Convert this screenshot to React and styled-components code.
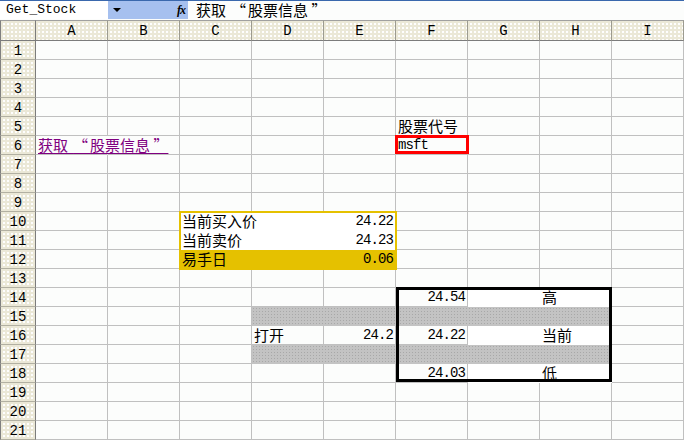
import React from 'react';
import styled, { createGlobalStyle, css } from 'styled-components';

const Global = createGlobalStyle`
  html, body { margin: 0; padding: 0; background: #fcfdfc; }
  body { width: 684px; height: 440px; overflow: hidden; }
`;

const COLS = ['A', 'B', 'C', 'D', 'E', 'F', 'G', 'H', 'I'];
const ROWS = Array.from({ length: 21 }, (_, i) => i + 1);

const Spaced = styled.span`
  letter-spacing: ${(p) => p.$gap}px;
`;

const Title = () => (
  <>
    获<Spaced $gap={5}>取</Spaced>
    <Spaced $gap={2}>“</Spaced>股票信息 ”
  </>
);

const DATA = {
  A6: { t: <Title />, link: true, over: true },
  F5: { t: '股票代号' },
  F6: { t: 'msft', num: true },
  C10: { t: '当前买入价', over: true },
  E10: { t: '24.22', num: true, right: true },
  C11: { t: '当前卖价' },
  E11: { t: '24.23', num: true, right: true },
  C12: { t: '易手日' },
  E12: { t: '0.06', num: true, right: true },
  F14: { t: '24.54', num: true, right: true },
  H14: { t: '高' },
  D16: { t: '打开' },
  E16: { t: '24.2', num: true, right: true },
  F16: { t: '24.22', num: true, right: true },
  H16: { t: '当前' },
  F18: { t: '24.03', num: true, right: true },
  H18: { t: '低' },
};

const FILLS = {};
['C10', 'D10', 'E10', 'C11', 'D11', 'E11'].forEach((k) => (FILLS[k] = 'white'));
['C12', 'D12', 'E12'].forEach((k) => (FILLS[k] = 'gold'));
['D', 'E', 'F', 'G', 'H'].forEach((c) => {
  FILLS[c + '15'] = 'gray';
  FILLS[c + '17'] = 'gray';
});
['G14', 'H14', 'G16', 'H16', 'G18', 'H18'].forEach((k) => (FILLS[k] = 'white'));

const NO_RIGHT = { A6: true };

const Window = styled.div`
  width: 684px;
  height: 440px;
  display: flex;
  flex-direction: column;
  background: #fcfdfc;
`;

const FormulaBar = styled.div`
  height: 20px;
  box-sizing: border-box;
  border-top: 1px solid #3a68ad;
  display: flex;
  align-items: flex-start;
  background: #fcfdfc;
`;

const NameBox = styled.div`
  width: 108px;
  height: 18px;
  background: #fff;
  box-sizing: border-box;
  padding-left: 6px;
  display: flex;
  align-items: center;
  font: 13px/18px "Liberation Mono", monospace;
  color: #000;
`;

const BoxTools = styled.div`
  width: 80px;
  height: 18px;
  background: #a6c0ef;
  display: flex;
  align-items: center;
  justify-content: space-between;
  padding: 0 3px 0 5px;
  box-sizing: border-box;
`;

const Arrow = styled.span`
  width: 0;
  height: 0;
  border-left: 4px solid transparent;
  border-right: 4px solid transparent;
  border-top: 4px solid #000;
`;

const Fx = styled.span`
  font: italic bold 12px/18px "Liberation Serif", serif;
  color: #000;
  letter-spacing: -1px;
`;

const FormulaText = styled.div`
  flex: 1;
  height: 19px;
  padding-left: 8px;
  font: 15px/18px "Noto Sans CJK SC", sans-serif;
  color: #000;
  white-space: nowrap;
`;

const Sheet = styled.div`
  position: relative;
  display: grid;
  grid-template-columns: 36px repeat(9, 72px);
  grid-template-rows: 21px repeat(21, 19px);
  background: #fcfdfc;
`;

const headerBg = css`
  background-color: #ebe8d7;
  background-image: radial-gradient(circle, #ffffff 0.7px, transparent 0.9px);
  background-size: 4px 4px;
  background-position: 1px 1px;
`;

const Corner = styled.div`
  ${headerBg};
  box-sizing: border-box;
  border-top: 1px solid #a0a0a0;
  border-right: 1px solid #7c7c7c;
  border-bottom: 1px solid #7c7c7c;
  border-left: 1px solid #808080;
`;

const ColHead = styled.div`
  ${headerBg};
  box-sizing: border-box;
  border-top: 1px solid #a0a0a0;
  border-right: 1px solid #9c9b90;
  border-bottom: 1px solid #7c7c7c;
  display: flex;
  align-items: center;
  justify-content: center;
  padding-top: 1px;
  font: 14px/16px "Liberation Mono", monospace;
  color: #000;
`;

const RowHead = styled.div`
  ${headerBg};
  box-sizing: border-box;
  border-left: 1px solid #808080;
  border-right: 1px solid #7c7c7c;
  border-bottom: 1px solid #b2b0a2;
  display: flex;
  align-items: center;
  justify-content: center;
  padding-top: 1px;
  font: 14px/16px "Liberation Mono", monospace;
  color: #000;
`;

const fills = {
  white: css`background: #ffffff;`,
  gold: css`background: #e5c100;`,
  gray: css`
    background-color: #c3c3c3;
    background-image: radial-gradient(circle, #a8a8a8 0.6px, transparent 0.8px);
    background-size: 3px 3px;
  `,
};

const Cell = styled.div`
  box-sizing: border-box;
  border-right: 1px solid ${(p) => (p.$fill || p.$noRight ? 'transparent' : '#c0c0c0')};
  border-bottom: 1px solid ${(p) => (p.$fill ? 'transparent' : '#c0c0c0')};
  ${(p) => p.$fill && fills[p.$fill]};
  ${(p) => p.$over && css`z-index: 1;`}
  display: flex;
  align-items: flex-end;
  justify-content: ${(p) => (p.$right ? 'flex-end' : 'flex-start')};
  padding: 0 2px 1px 2px;
  white-space: nowrap;
  overflow: visible;
`;

const Cjk = styled.span`
  font: 15px/17px "Noto Sans CJK SC", sans-serif;
  color: #000;
  ${(p) =>
    p.$link &&
    css`
      color: #800080;
      text-decoration: underline;
      text-underline-offset: 2px;
    `}
`;

const Num = styled.span`
  font: 14px/16px "Liberation Mono", monospace;
  letter-spacing: -0.9px;
  color: #000;
`;

const RangeBox = styled.div`
  position: absolute;
  box-sizing: border-box;
  z-index: 2;
  pointer-events: none;
  left: ${(p) => p.$x}px;
  top: ${(p) => p.$y}px;
  width: ${(p) => p.$w}px;
  height: ${(p) => p.$h}px;
  border: ${(p) => p.$t}px solid ${(p) => p.$c};
`;

export default function App() {
  const cells = [];
  cells.push(<Corner key="corner" />);
  COLS.forEach((c) => cells.push(<ColHead key={'h' + c}>{c}</ColHead>));
  ROWS.forEach((r) => {
    cells.push(<RowHead key={'r' + r}>{r}</RowHead>);
    COLS.forEach((c) => {
      const k = c + r;
      const d = DATA[k];
      cells.push(
        <Cell
          key={k}
          $fill={FILLS[k]}
          $noRight={NO_RIGHT[k]}
          $right={d && d.right}
          $over={d && d.over}
        >
          {d && (d.num ? <Num>{d.t}</Num> : <Cjk $link={d.link}>{d.t}</Cjk>)}
        </Cell>
      );
    });
  });

  return (
    <>
      <Global />
      <Window lang="zh-CN">
        <FormulaBar>
          <NameBox>Get_Stock</NameBox>
          <BoxTools>
            <Arrow />
            <Fx>fx</Fx>
          </BoxTools>
          <FormulaText>
            <Title />
          </FormulaText>
        </FormulaBar>
        <Sheet>
          {cells}
          <RangeBox $x={395} $y={115} $w={74} $h={19} $t={3} $c="#ff0000" />
          <RangeBox $x={179} $y={191} $w={218} $h={59} $t={2} $c="#e5c100" />
          <RangeBox $x={396} $y={267} $w={216} $h={95} $t={3} $c="#000000" />
        </Sheet>
      </Window>
    </>
  );
}
